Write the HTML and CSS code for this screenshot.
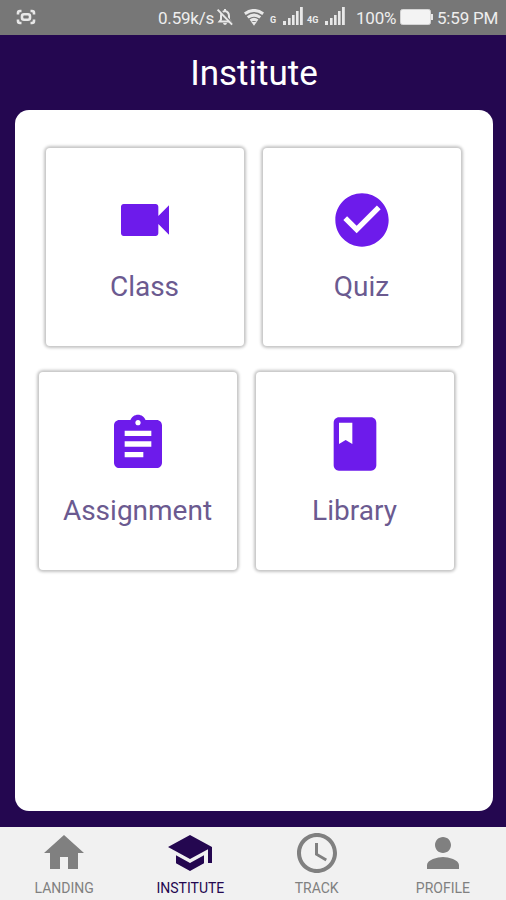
FILE: index.html
```html
<!DOCTYPE html>
<html lang="en">
<head>
    <meta charset="utf-8">
    <meta name="viewport" content="width=device-width, initial-scale=1">
    <title>Institute</title>
    <link rel="stylesheet" href="styles.css">
</head>
<body>
    <!-- Status bar -->
    <div class="statusbar">
        <svg class="capture" width="20" height="16" viewBox="0 0 20 16" fill="none" stroke="#e8e8e8" stroke-width="2.6">
            <path d="M2 5.500V4Q2 2 4 2h1.500M14.500 2H16q2 0 2 2v1.500M2 10.500V12q0 2 2 2h1.500M14.500 14H16q2 0 2-2v-1.500"/>
            <rect x="6" y="5.200" width="8" height="5.600" rx="2" stroke-width="2.600"/>
        </svg>
        <span class="speed">0.59k/s</span>
        <svg class="bell" width="18" height="18" viewBox="0 0 18 18">
            <path d="M3.500 13.500L5 11.500V8q0-4 4-5 4 1 4 5v3.500l1.500 2z" fill="none" stroke="#e8e8e8" stroke-width="2"/>
            <path d="M7 15h4q-.5 2-2 2t-2-2zM8 1h2v2H8z" fill="#e8e8e8"/>
            <path d="M3 1.200l14 15" stroke="#777" stroke-width="2"/>
            <path d="M1.600 1.600l14.500 15" stroke="#e8e8e8" stroke-width="2"/>
        </svg>
        <svg class="wifi" width="20" height="17" viewBox="0 0 20 17" fill="none" stroke="#e8e8e8" stroke-width="3">
            <path d="M.8 4.700q9.200-6.500 18.400 0M3.700 8.400q6.300-4.600 12.600 0M6.500 11.700q3.500-2.600 7 0"/>
            <path d="M7.300 13h5.400L10 16.700z" fill="#e8e8e8" stroke="none"/>
        </svg>
        <span class="net net-g">G</span>
        <svg class="bars" width="21" height="18" viewBox="0 0 21 18" fill="#e8e8e8">
            <path d="M0 14h3v4H0zM5 11h2.600v7H5zM9 8h2.600v10H9zM13 4h2.600v14H13zM17 0h2.800v18H17z"/>
        </svg>
        <span class="net net-4g">4G</span>
        <svg class="bars" width="21" height="18" viewBox="0 0 21 18" fill="#e8e8e8">
            <path d="M0 14h3v4H0zM5 11h2.600v7H5zM9 8h2.600v10H9zM13 4h2.600v14H13zM17 0h2.800v18H17z"/>
        </svg>
        <span class="percent">100%</span>
        <svg class="battery" width="33" height="16" viewBox="0 0 33 16">
            <rect x=".5" y=".5" width="30" height="15" rx="2" fill="#f3f3f3" stroke="#d4d4d4"/>
            <path d="M31 5h2v6h-2z" fill="#e8e8e8"/>
        </svg>
        <span class="clock">5:59 PM</span>
    </div>

    <h1 class="title">Institute</h1>

    <!-- Menu tiles -->
    <div class="panel">
        <div class="row">
            <div class="tile">
                <svg class="icon" viewBox="0 0 24 24"><path d="M17 10.500V7c0-.55-.45-1-1-1H4c-.55 0-1 .45-1 1v10c0 .55.45 1 1 1h12c.55 0 1-.45 1-1v-3.500l4 4v-11l-4 4z"/></svg>
                <span class="label">Class</span>
            </div>
            <div class="tile">
                <svg class="icon" viewBox="0 0 24 24"><path d="M12 2C6.480 2 2 6.480 2 12s4.480 10 10 10 10-4.480 10-10S17.520 2 12 2zm-2 15l-5-5 1.410-1.410L10 14.170l7.590-7.590L19 8l-9 9z"/></svg>
                <span class="label">Quiz</span>
            </div>
        </div>
        <div class="row row-second">
            <div class="tile">
                <svg class="icon" viewBox="0 0 24 24"><path d="M19 3h-4.180C14.400 1.840 13.300 1 12 1c-1.300 0-2.400.84-2.820 2H5c-1.100 0-2 .9-2 2v14c0 1.100.9 2 2 2h14c1.100 0 2-.9 2-2V5c0-1.100-.9-2-2-2zm-7 0c.55 0 1 .45 1 1s-.45 1-1 1-1-.45-1-1 .45-1 1-1zm2 14H7v-2h7v2zm3-4H7v-2h10v2zm0-4H7V7h10v2z"/></svg>
                <span class="label">Assignment</span>
            </div>
            <div class="tile">
                <svg class="icon" viewBox="0 0 24 24"><path d="M18 2H6c-1.100 0-2 .9-2 2v16c0 1.100.9 2 2 2h12c1.100 0 2-.9 2-2V4c0-1.100-.9-2-2-2zM6 4h5v8l-2.500-1.500L6 12V4z"/></svg>
                <span class="label">Library</span>
            </div>
        </div>
    </div>

    <!-- Bottom tabs -->
    <div class="tabs">
        <div class="tab">
            <svg class="tabicon" viewBox="0 0 24 24"><path d="M10 20v-6h4v6h5v-8h3L12 3 2 12h3v8z"/></svg>
            <span>LANDING</span>
        </div>
        <div class="tab active">
            <svg class="tabicon" viewBox="0 0 24 24"><path d="M5 13.180v4L12 21l7-3.820v-4L12 17l-7-3.820zM12 3L1 9l11 6 9-4.910V17h2V9L12 3z"/></svg>
            <span>INSTITUTE</span>
        </div>
        <div class="tab">
            <svg class="tabicon" viewBox="0 0 24 24"><path d="M11.990 2C6.470 2 2 6.480 2 12s4.470 10 9.990 10C17.520 22 22 17.520 22 12S17.520 2 11.990 2zM12 20c-4.420 0-8-3.580-8-8s3.580-8 8-8 8 3.580 8 8-3.580 8-8 8zm.5-13H11v6l5.250 3.150.75-1.230-4.500-2.670z"/></svg>
            <span>TRACK</span>
        </div>
        <div class="tab">
            <svg class="tabicon" viewBox="0 0 24 24"><path d="M12 12c2.210 0 4-1.790 4-4s-1.790-4-4-4-4 1.790-4 4 1.790 4 4 4zm0 2c-2.670 0-8 1.340-8 4v2h16v-2c0-2.660-5.330-4-8-4z"/></svg>
            <span>PROFILE</span>
        </div>
    </div>
</body>
</html>
```
FILE: styles.css
```css
* {
    box-sizing: border-box;
}
body {
    margin: 0;
    height: 900px;
    display: flex;
    flex-direction: column;
    overflow: hidden;
    background-color: #240750;
    font-family: Roboto, "Liberation Sans", sans-serif;
}
svg {
    display: block;
    flex: none;
}

/* Status bar */
.statusbar {
    height: 34.5px;
    flex: none;
    display: flex;
    align-items: center;
    padding-left: 16px;
    background-color: #777;
    color: #eee;
    font-size: 17px;
    line-height: 34px;
    white-space: nowrap;
}
.speed {
    width: 58px;
    margin-left: 122px;
    padding-top: 2px;
    letter-spacing: -0.2px;
}
.wifi {
    margin-left: 10px;
}
.net {
    font-size: 9px;
    font-weight: bold;
    padding-top: 6px;
}
.net-g {
    width: 13px;
    margin-left: 6px;
}
.net-4g {
    width: 19px;
    margin-left: 2px;
    padding-left: 1px;
}
.bars {
    margin-top: -2px;
}
.percent {
    width: 44px;
    margin-left: 10px;
    padding-top: 2px;
    letter-spacing: -0.2px;
}
.clock {
    margin-left: 4px;
    padding-top: 2px;
    letter-spacing: -0.2px;
}

.title {
    height: 75px;
    flex: none;
    margin: 0;
    padding: 1px 0 0 2px;
    color: #fff;
    font-size: 35px;
    font-weight: normal;
    line-height: 75px;
    text-align: center;
}

/* Menu tiles */
.panel {
    height: 701.5px;
    flex: none;
    margin: 0 13.5px 15.5px 14.5px;
    padding: 38.5px 0 0 31px;
    border-radius: 14px;
    background-color: #fff;
}
.row {
    display: flex;
    gap: 19px;
}
.row-second {
    margin: 26px 0 0 -7px;
}
.tile {
    width: 198px;
    height: 198px;
    display: flex;
    flex-direction: column;
    align-items: center;
    padding-top: 40px;
    border-radius: 4px;
    box-shadow: 0 0 3px 2px #c4c4c4;
}
.icon {
    width: 64px;
    height: 64px;
    fill: #6d1beb;
}
.label {
    margin-top: 19px;
    color: #6b5a90;
    font-size: 28px;
    line-height: 32px;
}

/* Bottom tabs */
.tabs {
    height: 74px;
    flex: none;
    display: flex;
    padding-left: 1px;
    background-color: #f1f1f1;
}
.tab {
    flex: 1;
    display: flex;
    flex-direction: column;
    align-items: center;
    padding-top: 2px;
    color: #808080;
    font-size: 14px;
    line-height: 22px;
}
.tabicon {
    width: 48px;
    height: 48px;
    fill: #808080;
}
.active {
    color: #240750;
}
.active .tabicon {
    fill: #240750;
}
```
